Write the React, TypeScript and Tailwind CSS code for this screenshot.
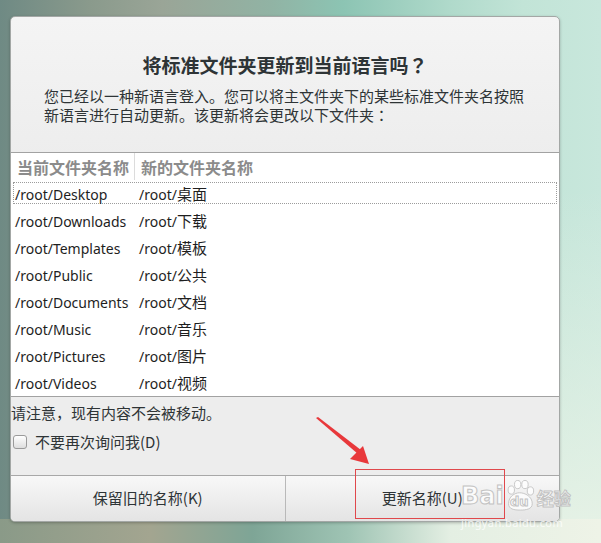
import React from 'react'

const ROWS = [
  ['Desktop', '桌面'],
  ['Downloads', '下载'],
  ['Templates', '模板'],
  ['Public', '公共'],
  ['Documents', '文档'],
  ['Music', '音乐'],
  ['Pictures', '图片'],
  ['Videos', '视频'],
] as const

const LATIN = "font-['Noto_Sans','Noto_Sans_CJK_SC',sans-serif]"
const CJK = "font-['Noto_Sans_CJK_SC',sans-serif]"
// centred full-width punctuation, as in the screenshot
const PUNCT = "font-['Noto_Sans_CJK_JP',sans-serif]"

function PawMark() {
  return (
    <svg viewBox="0 0 34 34" className="h-[31px] w-[31px]" fill="rgba(255,255,255,0.75)" stroke="#c4c4c4" strokeWidth="1">
      <ellipse cx="8" cy="11" rx="3.5" ry="4.5" />
      <ellipse cx="15" cy="5" rx="3.5" ry="4.5" />
      <ellipse cx="23" cy="5" rx="3.5" ry="4.5" />
      <ellipse cx="29" cy="12" rx="3.5" ry="4.5" />
      <path d="M5 26 C 5 18, 12 14, 17 14 C 23 14, 31 18, 31 26 C 31 32, 24 33, 18 33 C 11 33, 5 32, 5 26 Z" />
    </svg>
  )
}

export default function App() {
  return (
    <div
      className={`relative h-[543px] w-[601px] overflow-hidden pt-[16px] pl-[10px] ${LATIN} [background:linear-gradient(90deg,#8a9a88_0%,#a3a590_25%,#7ea596_42%,#9fc4b4_58%,#e4efe3_75%,#eef3e7_100%)_bottom/100%_24px_no-repeat,linear-gradient(180deg,rgba(236,244,232,0)_35%,rgba(236,244,232,0.85)_100%)_right/45px_100%_no-repeat,linear-gradient(90deg,#6f8a84_0%,#8a9a8c_15%,#9aa597_27%,#91b3a4_45%,#8cc4b3_57%,#b0dacb_75%,#c2e4d7_87%,#c8e7dc_100%)]`}
    >
      {/* dialog */}
      <div className="flex h-[506px] w-[550px] flex-col overflow-hidden rounded-[5px] border border-[#a3a7a5] bg-[linear-gradient(180deg,#f4f4f4_0%,#ededed_140px)] shadow-[0_1px_3px_rgba(0,0,0,0.25)]">
        <h1 className={`pt-[36px] text-center text-[19px] leading-[24px] font-bold text-[#2e3436] ${CJK}`}>
          将标准文件夹更新到当前语言吗<span className={PUNCT}>？</span>
        </h1>
        <p className={`mt-[9px] pl-[33px] text-[15px] leading-[19px] text-[#2e3436] ${CJK}`}>
          您已经以一种新语言登入。您可以将主文件夹下的某些标准文件夹名按照
          <br />
          新语言进行自动更新。该更新将会更改以下文件夹<span className={PUNCT}>：</span>
        </p>

        {/* table */}
        <div className="mt-[28px] border-y border-[#a2a2a2] bg-white">
          <div className={`flex h-[27px] items-center text-[16px] font-bold text-[#8b8b8b] ${CJK}`}>
            <div className="flex h-full w-[124px] items-center border-r border-[#dcdcdc] pl-[6px]">当前文件夹名称</div>
            <div className="pl-[6px]">新的文件夹名称</div>
          </div>
          {ROWS.map(([en, zh], i) => (
            <div key={en} className="h-[27px] px-[2px] pt-[2px] pb-[3px]">
              <div
                className={`flex h-full items-center border pt-[2px] text-[14px] text-[#1e1e1e] ${
                  i === 0 ? 'border-dotted border-[#9c9c9c]' : 'border-transparent'
                }`}
              >
                <div className="w-[125px] pl-[1px]">/root/{en}</div>
                <div>
                  /root/<span className="text-[15px]">{zh}</span>
                </div>
              </div>
            </div>
          ))}
        </div>

        <p className={`mt-[6px] text-[15px] leading-[19px] text-[#2e3436] ${CJK}`}>请注意，现有内容不会被移动。</p>
        <label className={`mt-[10px] flex items-center gap-[8px] pl-[2px] text-[15px] leading-[19px] text-[#2e3436] ${CJK}`}>
          <span className="h-[14px] w-[14px] rounded-[3px] border border-[#9a9a9a] bg-[linear-gradient(180deg,#ffffff,#dedede)]" />
          不要再次询问我(D)
        </label>

        {/* action bar */}
        <div className={`mt-auto flex h-[46px] border-t border-[#a8a8a8] bg-[linear-gradient(180deg,#f8f8f8,#e4e4e4)] text-[15px] text-[#2e3436] ${CJK}`}>
          <div className="flex flex-1 items-center justify-center">保留旧的名称(K)</div>
          <div className="flex flex-1 items-center justify-center border-l border-[#b9b9b9]">更新名称(U)</div>
        </div>
      </div>

      {/* annotation: red arrow and highlight box */}
      <svg className="absolute top-[415px] left-[312px] h-[55px] w-[62px]" viewBox="312 415 62 55">
        <path d="M316 418 L318 417 L361 450 L358 454 Z" fill="#e8383b" />
        <path d="M369 464 L350 459 L363 446 Z" fill="#e8383b" />
      </svg>
      <div className="absolute top-[469px] left-[355px] h-[50px] w-[150px] border-[1.5px] border-[#e0484c]" />

      {/* watermark */}
      <div className="pointer-events-none absolute top-[480px] left-[461px] flex items-end whitespace-nowrap font-['DejaVu_Sans',sans-serif] text-[rgba(255,255,255,0.8)] [-webkit-text-stroke:1px_#c2c2c2]">
        <span className="text-[24px] leading-[30px] font-bold">Bai</span>
        <span className="relative h-[31px] w-[31px]">
          <PawMark />
          <span className="absolute inset-x-0 bottom-[2px] text-center text-[13px] leading-[14px] font-bold">du</span>
        </span>
        <span className={`ml-[2px] text-[17px] leading-[26px] font-bold ${CJK}`}>经验</span>
      </div>
      <div className="pointer-events-none absolute top-[517px] left-[461px] whitespace-nowrap text-[11px] leading-[12px] tracking-[0.4px] text-[rgba(255,255,255,0.8)]">
        jingyan.baidu.com
      </div>
    </div>
  )
}
